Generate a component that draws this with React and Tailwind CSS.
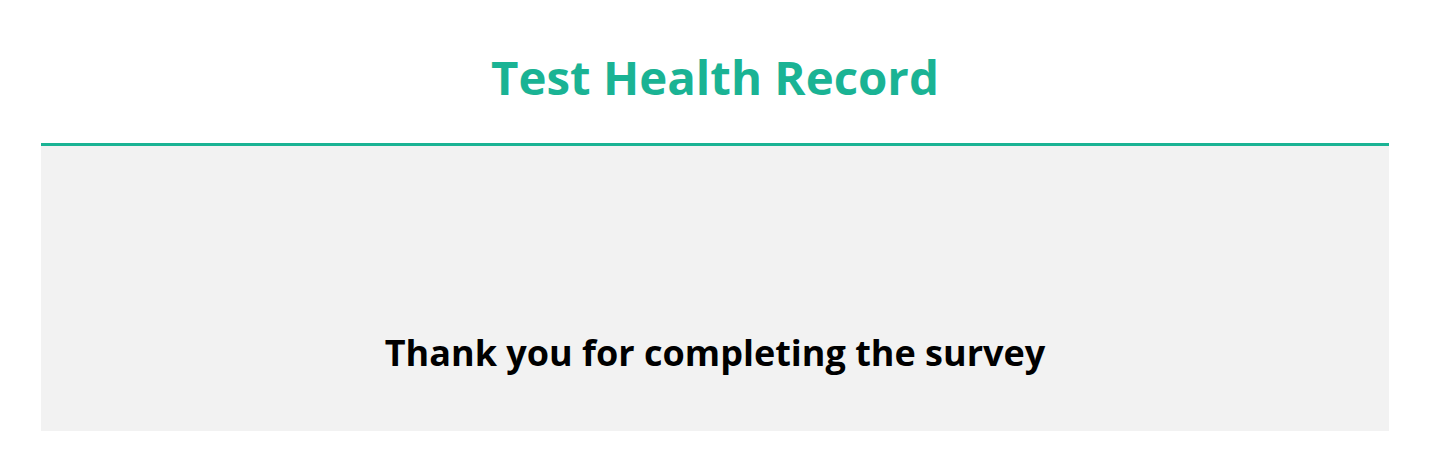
import React from 'react';

export default function App() {
  return (
    <div className="min-h-screen bg-white" style={{ fontFamily: '"Open Sans", sans-serif' }}>
      <div className="w-[1430px] px-[41px]">
        {/* Header */}
        <div className="pt-[53px] pb-[42px] text-center">
          <h1 className="text-[47.4px] leading-[48px] font-bold text-[#1ab394]">
            Test Health Record
          </h1>
        </div>

        {/* Body */}
        <div className="border-t-[3px] border-[#1ab394] bg-[#f2f2f2] pt-[189px] pb-[60px] text-center">
          <h2 className="text-[36px] leading-none font-bold text-black">
            Thank you for completing the survey
          </h2>
        </div>
      </div>
    </div>
  );
}
